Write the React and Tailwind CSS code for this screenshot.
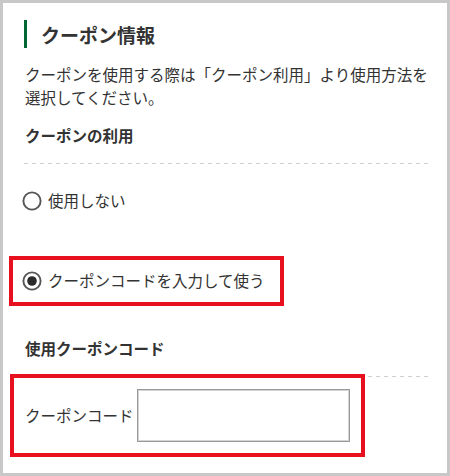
export default function App() {
  const font = { fontFamily: '"Noto Sans CJK JP", "Noto Sans", sans-serif' };
  const Dash = () => (
    <div className="h-px w-full bg-[linear-gradient(to_right,#cfcfcf_50%,transparent_50%)] bg-[length:8px_1px]" />
  );
  const Radio = ({ checked }) => (
    <svg width="20" height="20" viewBox="0 0 20 20" className="shrink-0">
      <circle cx="10" cy="10" r="8.6" fill="#fff" stroke="#555" strokeWidth="1.9" />
      {checked && <circle cx="10" cy="10" r="4.8" fill="#2b2b2b" />}
    </svg>
  );
  return (
    <div className="w-[450px] h-[476px] bg-[#c8c8c8] p-[3px]" style={font}>
      <div className="h-full bg-white pl-[21px] pr-[15px] pt-[17px] text-[#333]">
        <div className="h-[28px] border-l-[3px] border-[#006633] pl-[14px] flex items-center">
          <span className="text-[19px] font-bold leading-none">クーポン情報</span>
        </div>
        <p className="mt-[15px] text-[15.5px] leading-[23px] pl-[1px]">
          クーポンを使用する際は「クーポン利用」より使用方法を選択してください。
        </p>
        <div className="mt-[15px] text-[15.5px] leading-[23px] font-bold pl-[1px]">クーポンの利用</div>
        <div className="mt-[16px]">
          <Dash />
        </div>
        <div className="mt-[25px] -ml-[2px] flex items-center gap-[6px] h-[23px] text-[15.5px]">
          <Radio />
          <span>使用しない</span>
        </div>
        <div className="relative mt-[57px] -ml-[2px] flex items-center gap-[6px] h-[23px] text-[15.5px]">
          <Radio checked />
          <span className="whitespace-nowrap">クーポンコードを入力して使う</span>
          <div className="absolute top-[-13px] left-[-13px] w-[275px] h-[50px] border-[4px] border-[#e8101e]" />
        </div>
        <div className="mt-[45px] text-[15.5px] leading-[23px] font-bold pl-[1px]">使用クーポンコード</div>
        <div className="mt-[16px]">
          <Dash />
        </div>
        <div className="relative mt-[12px] flex items-center gap-[3px] pl-[1px]">
          <span className="text-[15.5px] leading-[23px] whitespace-nowrap shrink-0">クーポンコード</span>
          <div className="w-[213px] h-[53px] shrink-0 border border-[#999] shadow-[inset_0_0_0_1px_#d4d4d4] bg-white" />
          <div className="absolute top-[-15px] left-[-14px] w-[355px] h-[83px] border-[4px] border-[#e8101e] pointer-events-none" />
        </div>
      </div>
    </div>
  );
}
